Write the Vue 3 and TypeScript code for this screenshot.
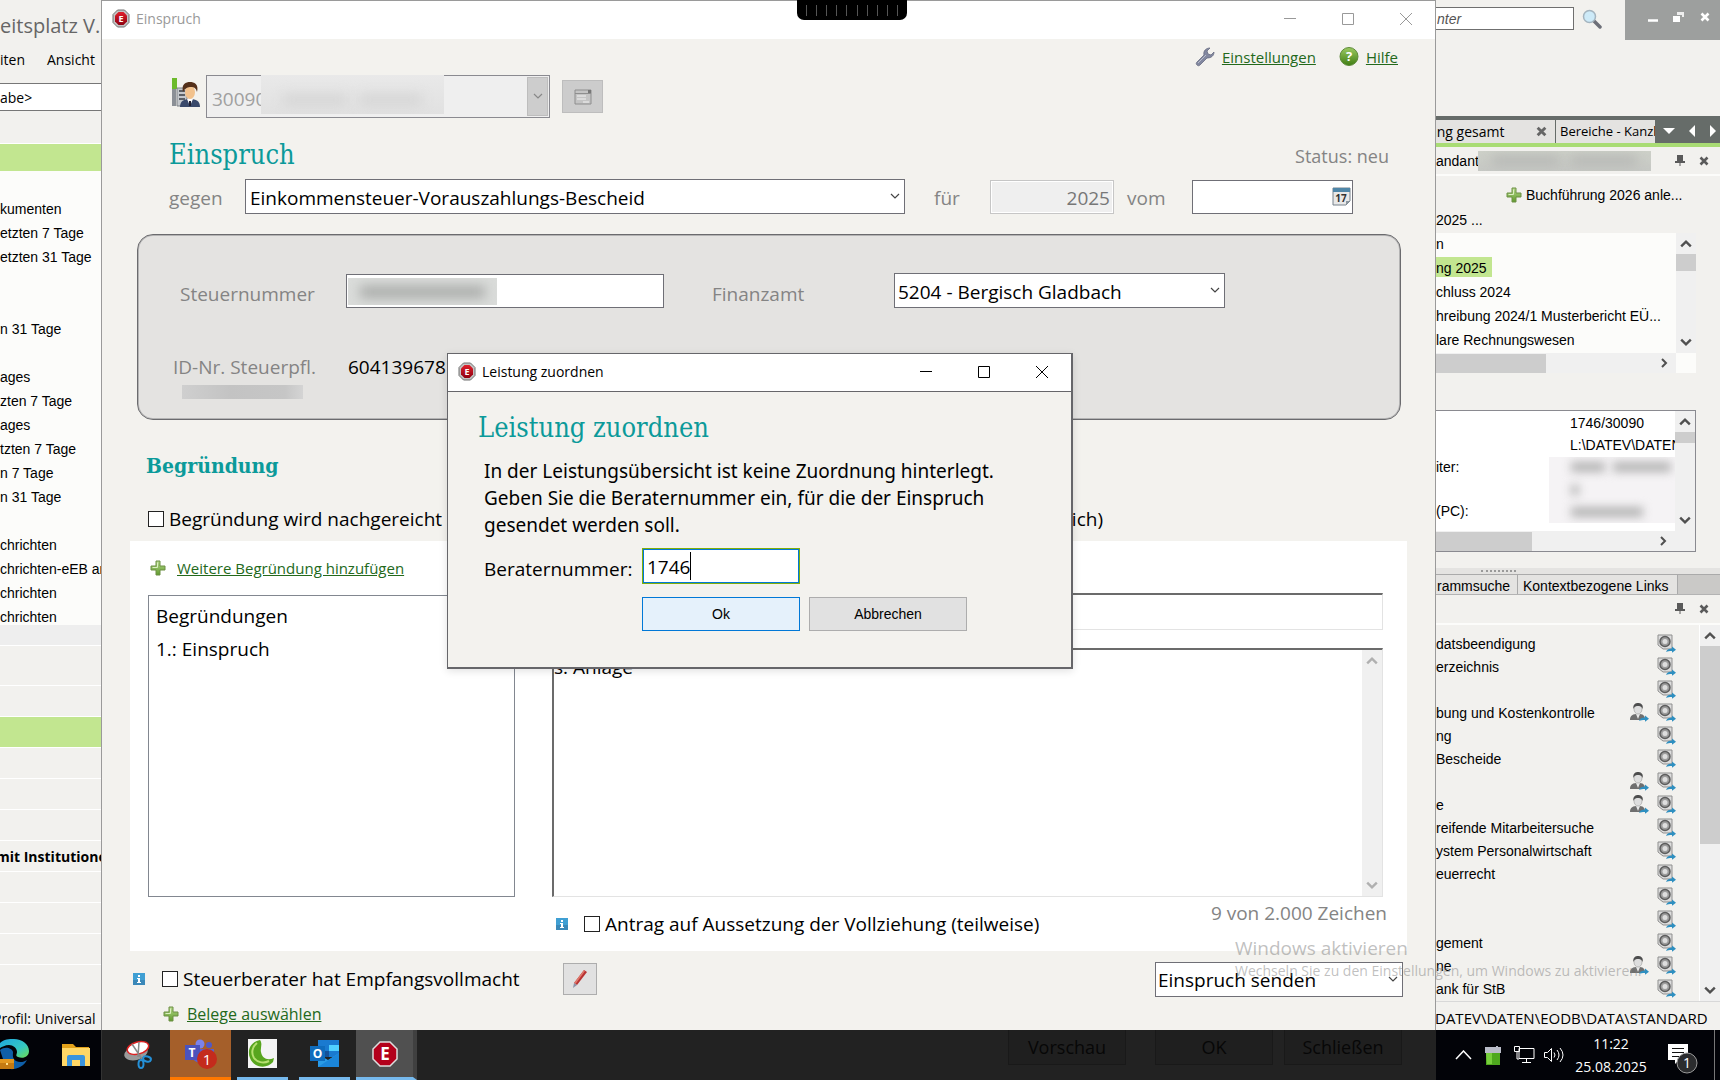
<script setup lang="ts">
import { ref } from 'vue'

interface LinkRow {
  text: string
  person?: boolean
}

const consultantNo = ref('1746')
const year = ref('2025')
const reasonText = ref('s. Anlage')

const leftTree: string[] = [
  'kumenten', 'etzten 7 Tage', 'etzten 31 Tage', '', '', 'n 31 Tage', '', 'ages', 'zten 7 Tage',
  'ages', 'tzten 7 Tage', 'n 7 Tage', 'n 31 Tage', '', 'chrichten', 'chrichten-eEB an', 'chrichten', 'chrichten',
]

const stock: { text: string; active?: boolean }[] = [
  { text: 'n' },
  { text: 'ng 2025', active: true },
  { text: 'chluss 2024' },
  { text: 'hreibung 2024/1 Musterbericht EÜ...' },
  { text: 'lare Rechnungswesen' },
]

const links: LinkRow[] = [
  { text: 'datsbeendigung' },
  { text: 'erzeichnis' },
  { text: '' },
  { text: 'bung und Kostenkontrolle', person: true },
  { text: 'ng' },
  { text: 'Bescheide' },
  { text: '', person: true },
  { text: 'e', person: true },
  { text: 'reifende Mitarbeitersuche' },
  { text: 'ystem Personalwirtschaft' },
  { text: 'euerrecht' },
  { text: '' },
  { text: '' },
  { text: 'gement' },
  { text: 'ne', person: true },
  { text: 'ank für StB' },
  { text: '', person: true },
]
</script>

<template>
  <div class="desktop">
    <svg class="defs" width="0" height="0" aria-hidden="true">
      <defs>
        <linearGradient id="gGreen" x1="0" y1="0" x2="0" y2="1">
          <stop offset="0" stop-color="#b5d98a" /><stop offset="1" stop-color="#5f9a2c" />
        </linearGradient>
        <linearGradient id="gBall" x1="0" y1="0" x2="0" y2="1">
          <stop offset="0" stop-color="#9ccb62" /><stop offset="1" stop-color="#3f7d12" />
        </linearGradient>
        <linearGradient id="gRed" x1="0" y1="0" x2="0" y2="1">
          <stop offset="0" stop-color="#e0202c" /><stop offset="1" stop-color="#8f0010" />
        </linearGradient>
        <linearGradient id="gEdge" x1="0" y1="0" x2="1" y2="1">
          <stop offset="0" stop-color="#1fa8e0" /><stop offset=".6" stop-color="#35c8c0" /><stop offset="1" stop-color="#6fdc50" />
        </linearGradient>
        <symbol id="stopE" viewBox="0 0 20 20">
          <path d="M6.500 1h7l4.500 4.500v8L13.500 18h-7L2 13.500v-8z" fill="#c4c4c4" stroke="#707070" stroke-width="1" />
          <path d="M7.500 3h5L16 6.500v6L12.500 16h-5L4 12.500v-6z" fill="url(#gRed)" />
          <text x="10" y="13" text-anchor="middle" font-family="Open Sans, sans-serif" font-weight="700" font-size="9" fill="#fff">E</text>
        </symbol>
        <symbol id="plus" viewBox="0 0 16 16">
          <path d="M6 1h4v5h5v4h-5v5H6v-5H1V6h5z" fill="url(#gGreen)" stroke="#6c8f45" stroke-width="1" />
          <path d="M7.500 2.500v5h-5" fill="none" stroke="#dcefc2" stroke-width="1" />
        </symbol>
        <symbol id="info" viewBox="0 0 12 12">
          <path d="M0 0h12v12H0z" fill="#3f9fd3" />
          <path d="M0 12h12V7H0z" fill="#3a88b8" />
          <path d="M5 2h2v2H5zM4 5h3v4h1v1H4V9h1V6H4z" fill="#fff" />
        </symbol>
        <symbol id="pin" viewBox="0 0 10 12">
          <path d="M2 0h6v6h2v2H5.500v3h-1V8H0V6h2z" fill="#5a5a5a" />
        </symbol>
        <symbol id="cross" viewBox="0 0 10 10">
          <path d="M1.500 1.500l7 7M8.500 1.500l-7 7" stroke="currentColor" stroke-width="2.600" />
        </symbol>
        <symbol id="vault" viewBox="0 0 19 19">
          <path d="M1 1h14v14H6l-5-4z" fill="#dcdcdc" stroke="#8f8f8f" />
          <circle cx="8" cy="7.500" r="5" fill="#9d9d9d" stroke="#5d5d5d" stroke-width="1.500" />
          <circle cx="8" cy="7.500" r="2.500" fill="#dedede" />
          <path d="M9 18c1-3 3-3.500 6-3.500v-2l4 3.200-4 3v-1.800c-3 0-4 0-6 1.100z" fill="#2f8fc0" />
        </symbol>
        <symbol id="person" viewBox="0 0 20 19">
          <path d="M1 17c0-5 3-6 8-6s7 1 7 6z" fill="#6f6f6f" />
          <path d="M7 11l2 5 2-5z" fill="#e9e9e9" />
          <ellipse cx="9" cy="6" rx="4" ry="5" fill="#dedede" stroke="#9a9a9a" stroke-width=".6" />
          <path d="M4.500 6C3.500 1 7 0 9 0s6 1 4.500 6c-1-3-3-3-4.500-3s-3.500 0-4.500 3z" fill="#4e4e4e" />
          <path d="M10 18c1-3 3-3.500 6-3.500v-2l4 3.200-4 3v-1.800c-3 0-4 0-6 1.100z" fill="#2f8fc0" />
        </symbol>
        <symbol id="arrUp" viewBox="0 0 10 8"><path d="M1 6l4-4 4 4" fill="none" stroke="currentColor" stroke-width="2" /></symbol>
        <symbol id="arrDown" viewBox="0 0 10 8"><path d="M1 2l4 4 4-4" fill="none" stroke="currentColor" stroke-width="2" /></symbol>
        <symbol id="arrRight" viewBox="0 0 8 10"><path d="M2 1l4 4-4 4" fill="none" stroke="currentColor" stroke-width="2" /></symbol>
        <symbol id="chev" viewBox="0 0 10 7"><path d="M1 1l4 4 4-4" fill="none" stroke="currentColor" stroke-width="1.200" /></symbol>
      </defs>
    </svg>

    <div class="workspace">
      <!-- Left part of the workplace window -->
      <aside class="left">
        <div class="app-title">eitsplatz V.1</div>
        <nav class="menu"><a href="#">iten</a><a href="#">Ansicht</a></nav>
        <input class="quick" type="text" value="abe&gt;" aria-label="Suche" />
        <div class="strip"></div>
        <ul class="tree">
          <li v-for="(t, i) in leftTree" :key="i">{{ t }}</li>
        </ul>
        <div class="track"></div>
        <div class="bars">
          <div class="bar tall"></div>
          <div class="bar"></div>
          <div class="bar on"></div>
          <div class="bar"></div>
          <div class="bar"></div>
          <div class="bar"></div>
          <div class="bar strong">mit Institutionen</div>
          <div class="bar"></div>
          <div class="bar"></div>
          <div class="bar"></div>
          <div class="bar last"></div>
        </div>
        <div class="status-left">Profil: Universal</div>
      </aside>

      <!-- Objection window -->
      <main class="window">
        <header class="titlebar">
          <svg width="20" height="20"><use href="#stopE" /></svg>
          <span class="caption">Einspruch</span>
          <button class="wbtn" aria-label="Minimieren"><svg width="12" height="12"><path d="M0 5.500h12" stroke="currentColor" /></svg></button>
          <button class="wbtn" aria-label="Maximieren"><svg width="12" height="12"><path d="M.5.5h11v11H.5z" fill="none" stroke="currentColor" /></svg></button>
          <button class="wbtn" aria-label="Schließen"><svg width="12" height="12"><path d="M0 0l12 12M12 0L0 12" stroke="currentColor" /></svg></button>
        </header>

        <div class="helpbar">
          <svg width="20" height="20" viewBox="0 0 20 20"><path d="M2 18c-1-1-1-2 0-3l7-7c-1-4 2-7 6-7l-3 3 1 3 3 1 3-3c0 4-3 6-7 6l-7 7c-1 1-2 1-3 0z" fill="#8288a0" stroke="#666b80" stroke-width=".8" /><path d="M3 16l8-8" stroke="#b9bdcc" stroke-width="1" /></svg>
          <a href="#">Einstellungen</a>
          <svg class="help-ic" width="20" height="20" viewBox="0 0 20 20"><circle cx="10" cy="9.500" r="9" fill="url(#gBall)" stroke="#5c8a38" /><text x="10" y="14" text-anchor="middle" font-family="Open Sans, sans-serif" font-weight="700" font-size="13" fill="#fff">?</text></svg>
          <a href="#">Hilfe</a>
        </div>

        <div class="client">
          <svg class="client-ic" width="30" height="30" viewBox="0 0 30 30">
            <path d="M1 4h4v24H1z" fill="#8b9096" /><path d="M1 0h5v11H1z" fill="#6dbb2c" />
            <path d="M6 10h10v18H6z" fill="#c4c8cc" stroke="#7d8287" /><path d="M8 13h6M8 17h6M8 21h6" stroke="#5c6167" stroke-width="2" />
            <path d="M9 29c0-6 4-8 10-8s10 2 10 8z" fill="#39496b" />
            <path d="M16 21l3 7 3-7z" fill="#fff" /><path d="M18 23h2v5h-2z" fill="#223" />
            <ellipse cx="19" cy="14" rx="5" ry="7" fill="#f2c28d" />
            <path d="M12 14c-2-8 3-10 7-10s9 2 7 10c-1-4-3-5-6-5s-6 1-8 5z" fill="#54301a" />
          </svg>
          <div class="client-box">
            <label class="sr" for="client">Mandant</label>
            <input id="client" type="text" value="30090" disabled />
            <span class="veil veil-client"><i></i><i></i></span>
            <button class="drop" disabled aria-label="Mandanten öffnen"><svg width="10" height="7"><use href="#chev" /></svg></button>
          </div>
          <button class="card-btn" disabled aria-label="Stammdaten">
            <svg width="18" height="16" viewBox="0 0 18 16"><path d="M1 1h16v14H1z" fill="#c4c4c4" stroke="#8e8e8e" /><path d="M1 4.500h16" stroke="#8e8e8e" /><path d="M3 7h9M3 10h9M9 13h6" stroke="#e2e2e2" stroke-width="1.500" /><path d="M14 1h3v3h-3z" fill="#777" /></svg>
          </button>
        </div>

        <div class="headrow">
          <h1>Einspruch</h1>
          <span class="grey status">Status: neu</span>
        </div>

        <div class="against">
          <label class="grey l-gegen" for="gegen">gegen</label>
          <div class="sel grow">
            <select id="gegen"><option>Einkommensteuer-Vorauszahlungs-Bescheid</option></select>
            <svg width="10" height="7"><use href="#chev" /></svg>
          </div>
          <label class="grey l-fuer" for="jahr">für</label>
          <input id="jahr" v-model="year" class="year" type="text" disabled />
          <label class="grey l-vom" for="datum">vom</label>
          <div class="date">
            <input id="datum" type="text" value="" />
            <svg width="19" height="19" viewBox="0 0 19 19"><path d="M1 1h17v13l-4 4H1z" fill="#e8e8e8" stroke="#77828c" /><path d="M1 1h17v4H1z" fill="#4f86a8" /><path d="M14 18v-4h4z" fill="#8c969e" /><text x="9" y="15" text-anchor="middle" font-family="Open Sans, sans-serif" font-weight="700" font-size="10" fill="#333">17</text></svg>
          </div>
        </div>

        <section class="panel">
          <div class="prow">
            <label class="grey l-tax" for="stnr">Steuernummer</label>
            <div class="tax"><input id="stnr" type="text" value="" /><span class="veil veil-tax"><i></i></span></div>
            <label class="grey l-office" for="fa">Finanzamt</label>
            <div class="sel office">
              <select id="fa"><option>5204 - Bergisch Gladbach</option></select>
              <svg width="10" height="7"><use href="#chev" /></svg>
            </div>
          </div>
          <div class="prow second">
            <span class="grey l-id">ID-Nr. Steuerpfl.</span>
            <span>604139678</span>
          </div>
          <div class="smudge"></div>
        </section>

        <h2>Begründung</h2>
        <div class="later">
          <label><input type="checkbox" />Begründung wird nachgereicht</label>
          <span class="later-end">ich)</span>
        </div>

        <section class="reasons">
          <div class="col-list">
            <div class="add"><svg width="16" height="16"><use href="#plus" /></svg><a href="#">Weitere Begründung hinzufügen</a></div>
            <ul class="listbox"><li>Begründungen</li><li>1.: Einspruch</li></ul>
          </div>
          <div class="col-text">
            <input class="sunken subject" type="text" value="" aria-label="Überschrift" />
            <div class="sunken area">
              <textarea v-model="reasonText" aria-label="Begründungstext"></textarea>
              <div class="sbar pale"><svg width="12" height="10"><use href="#arrUp" /></svg><svg width="12" height="10"><use href="#arrDown" /></svg></div>
            </div>
            <div class="suspend">
              <svg width="12" height="12"><use href="#info" /></svg>
              <label><input type="checkbox" />Antrag auf Aussetzung der Vollziehung (teilweise)</label>
              <span class="grey counter">9 von 2.000 Zeichen</span>
            </div>
          </div>
        </section>

        <div class="proxy">
          <svg width="12" height="12"><use href="#info" /></svg>
          <label><input type="checkbox" />Steuerberater hat Empfangsvollmacht</label>
          <button class="pencil" aria-label="Bearbeiten"><svg width="18" height="20" viewBox="0 0 18 20"><path d="M13 1l3 2L6 16l-3-2z" fill="#b83232" /><path d="M13 1l1 1L4.500 15 3 14z" fill="#e07a6e" /><path d="M3 14l3 2-4 3z" fill="#8d93a8" /></svg></button>
          <div class="sel send">
            <select aria-label="Aktion"><option>Einspruch senden</option></select>
            <svg width="10" height="7"><use href="#chev" /></svg>
          </div>
        </div>
        <div class="add docs"><svg width="16" height="16"><use href="#plus" /></svg><a href="#">Belege auswählen</a></div>
      </main>

      <!-- Right part of the workplace window -->
      <aside class="right">
        <div class="topline">
          <input class="find" type="text" value="nter" aria-label="Suchbegriff" />
          <svg class="lens" width="20" height="20" viewBox="0 0 20 20"><path d="M12 12l6 6" stroke="#6d6f78" stroke-width="3.500" stroke-linecap="round" /><circle cx="7.500" cy="7.500" r="6" fill="#cdeaf8" stroke="#a4b4bf" stroke-width="1.500" /></svg>
          <div class="ctl">
            <svg width="10" height="12"><path d="M0 9.500h10" stroke="#fff" stroke-width="2.500" /></svg>
            <svg width="12" height="12"><path d="M4 1h7v5H9V4H4z" fill="#eee" /><path d="M0 5h7v6H0z" fill="#fff" /></svg>
            <svg width="10" height="10"><use href="#cross" /></svg>
          </div>
        </div>
        <div class="tabs-dark">
          <div class="tab t1"><span>ang gesamt</span><svg width="11" height="11"><use href="#cross" /></svg></div>
          <div class="tab t2">Bereiche - Kanzlei</div>
          <svg width="12" height="8"><path d="M0 1h12L6 7z" fill="#fff" /></svg>
          <svg width="8" height="12"><path d="M7 0v12L1 6z" fill="#fff" /></svg>
          <svg width="8" height="12"><path d="M1 0v12l6-6z" fill="#fff" /></svg>
        </div>
        <div class="pane-head first">
          <span>andant</span><span class="veil veil-mandant"><i></i><i></i></span>
          <svg class="pin" width="10" height="12"><use href="#pin" /></svg><svg width="10" height="10"><use href="#cross" /></svg>
        </div>
        <div class="booking"><svg width="16" height="16"><use href="#plus" /></svg><a href="#">Buchführung 2026 anle...</a></div>
        <div class="year-line">2025 ...</div>
        <div class="stock">
          <ul><li v-for="s in stock" :key="s.text"><span :class="{ active: s.active }">{{ s.text }}</span></li></ul>
          <div class="sbar"><svg width="12" height="10"><use href="#arrUp" /></svg><span class="thumb t-a"></span><svg class="end" width="12" height="10"><use href="#arrDown" /></svg></div>
          <div class="hbar"><span class="thumb h-a"></span><svg width="8" height="12"><use href="#arrRight" /></svg></div>
          <div class="corner"></div>
        </div>
        <div class="details">
          <dl>
            <dt></dt><dd>1746/30090</dd>
            <dt></dt><dd>L:\DATEV\DATEN</dd>
            <dt>iter:</dt><dd></dd>
            <dt></dt><dd></dd>
            <dt>(PC):</dt><dd></dd>
          </dl>
          <span class="veil veil-details"><i></i><i></i><i></i><i></i></span>
          <div class="sbar"><svg width="12" height="10"><use href="#arrUp" /></svg><span class="thumb t-b"></span><svg class="end" width="12" height="10"><use href="#arrDown" /></svg></div>
          <div class="hbar"><span class="thumb h-b"></span><svg width="8" height="12"><use href="#arrRight" /></svg></div>
          <div class="corner grey-corner"></div>
        </div>
        <div class="splitter"><span></span></div>
        <div class="tabs-light"><div class="tab p1">rammsuche</div><div class="tab p2">Kontextbezogene Links</div></div>
        <div class="pane-head"><span></span><svg class="pin" width="10" height="12"><use href="#pin" /></svg><svg width="10" height="10"><use href="#cross" /></svg></div>
        <div class="links">
          <ul>
            <li v-for="(l, i) in links" :key="i">
              <a href="#">{{ l.text }}</a>
              <svg v-if="l.person" width="20" height="19"><use href="#person" /></svg>
              <svg width="19" height="19"><use href="#vault" /></svg>
            </li>
          </ul>
          <div class="sbar"><svg width="12" height="10"><use href="#arrUp" /></svg><span class="thumb t-c"></span><svg class="end" width="12" height="10"><use href="#arrDown" /></svg></div>
        </div>
        <div class="status-right">DATEV\DATEN\EODB\DATA\STANDARD</div>
      </aside>

      <div class="grip"><span v-for="n in 10" :key="n"></span></div>

      <!-- Assignment dialog -->
      <div class="dialog" role="dialog" aria-labelledby="dlg">
        <header class="titlebar">
          <svg width="20" height="20"><use href="#stopE" /></svg>
          <span class="caption">Leistung zuordnen</span>
          <button class="wbtn" aria-label="Minimieren"><svg width="12" height="12"><path d="M0 5.500h12" stroke="currentColor" /></svg></button>
          <button class="wbtn" aria-label="Maximieren"><svg width="12" height="12"><path d="M.5.5h11v11H.5z" fill="none" stroke="currentColor" /></svg></button>
          <button class="wbtn" aria-label="Schließen"><svg width="12" height="12"><path d="M0 0l12 12M12 0L0 12" stroke="currentColor" /></svg></button>
        </header>
        <div class="dlg-body">
          <h1 id="dlg">Leistung zuordnen</h1>
          <p>In der Leistungsübersicht ist keine Zuordnung hinterlegt.<br />Geben Sie die Beraternummer ein, für die der Einspruch<br />gesendet werden soll.</p>
          <div class="dlg-grid">
            <label for="berater">Beraternummer:</label>
            <div class="focus"><input id="berater" v-model="consultantNo" type="text" /><span class="caret"></span></div>
            <button class="btn primary">Ok</button>
            <button class="btn">Abbrechen</button>
          </div>
        </div>
      </div>

      <div class="watermark"><strong>Windows aktivieren</strong><span>Wechseln Sie zu den Einstellungen, um Windows zu aktivieren.</span></div>
    </div>

    <footer class="taskbar">
      <div class="tb-left">
        <svg width="30" height="32" viewBox="0 0 30 32">
          <path d="M0 4C4 0 9 0 14 0c8 0 15 5 15 12 0 6-6 8-11 6-3-1-1-3-1-5 0-4-4-7-8-7S2 8 0 9z" fill="url(#gEdge)" />
          <path d="M0 11c5-4 12-2 13 2 0 3-1 6 3 9 4 2 8 1 11-1-4 8-14 11-21 8z" fill="#0f5fa8" />
          <path d="M0 20h14v10H0z" fill="#c47a12" /><path d="M0 20h14v4H0z" fill="#e2971f" /><path d="M6 24h2v2H6z" fill="#ffe08a" />
        </svg>
        <svg width="28" height="24" viewBox="0 0 28 24"><path d="M0 1h11l3 3h13v19H0z" fill="#e3a21a" /><path d="M0 5h28v18H0z" fill="#ffd766" /><path d="M5 23V14q0-2 2-2h14q2 0 2 2v9h-5v-6h-8v6z" fill="#3a94dd" /></svg>
      </div>
      <div class="tb-mid">
        <div class="task snip"><svg width="30" height="30" viewBox="0 0 30 30"><ellipse cx="13" cy="13" rx="12" ry="7" transform="rotate(-15 13 13)" fill="#9a9a9a" /><ellipse cx="15" cy="8" rx="11" ry="6" transform="rotate(-15 15 8)" fill="#fff" stroke="#d22" stroke-width="1.500" /><path d="M9 4l10 15M16 2l-1 15" stroke="#888" stroke-width="1.500" /><ellipse cx="24" cy="19" rx="4" ry="2.500" transform="rotate(15 24 19)" fill="none" stroke="#2490d8" stroke-width="2" /><ellipse cx="18" cy="24" rx="2.500" ry="4" fill="none" stroke="#2490d8" stroke-width="2" /></svg></div>
        <div class="task teams"><svg width="32" height="30" viewBox="0 0 32 30"><circle cx="15" cy="5" r="4.500" fill="#7b83eb" /><circle cx="24" cy="6" r="3" fill="#5059c9" /><path d="M8 10h21v9c0 6-19 8-21 0z" fill="#5b62c9" /><path d="M0 6h15v15H0z" fill="#4b53bc" /><text x="7" y="18" text-anchor="middle" font-family="Open Sans, sans-serif" font-weight="700" font-size="12" fill="#fff">T</text><circle cx="22" cy="20" r="10" fill="#c42b1c" /><text x="22" y="26" text-anchor="middle" font-family="Open Sans, sans-serif" font-size="15" fill="#fff">1</text></svg></div>
        <div class="task run"><svg width="29" height="29" viewBox="0 0 29 29"><path d="M0 0h29v29H0z" fill="#f4f4f4" /><path d="M12 1C2 3-1 12 2 19c3 9 16 12 23 4l1-4c-7 3-12 0-13-6-1-4 2-8-1-12z" fill="#58a51e" /><path d="M9 4C4 8 3 14 6 19c3 4 9 6 15 3" fill="none" stroke="#b6e070" stroke-width="2" /></svg></div>
        <div class="task run"><svg width="30" height="28" viewBox="0 0 30 28"><path d="M8 0h21v17H8z" fill="#1a7ad0" /><path d="M19 5h10v6H19z" fill="#50d0ff" /><path d="M8 11h11v6H8z" fill="#14519a" /><path d="M8 14l10 6 11-7v14H8z" fill="#2a9be6" /><path d="M8 27l21-14v14z" fill="#1b86da" /><path d="M0 6h15v15H0z" fill="#0f6cbd" /><text x="7.500" y="18" text-anchor="middle" font-family="Open Sans, sans-serif" font-weight="700" font-size="12" fill="#fff">O</text></svg></div>
        <div class="task cur"><svg width="26" height="26" viewBox="0 0 26 26"><path d="M8 1h10l7 7v10l-7 7H8l-7-7V8z" fill="#b3001b" stroke="#ddd" stroke-width="1.500" /><text x="13" y="19" text-anchor="middle" font-family="Open Sans, sans-serif" font-weight="700" font-size="17" fill="#fff">E</text></svg></div>
        <div class="under">
          <button>Vorschau</button><button>OK</button><button>Schließen</button>
        </div>
      </div>
      <div class="tb-right">
        <svg width="17" height="10"><path d="M1 9l7.500-8L16 9" fill="none" stroke="#fff" stroke-width="1.500" /></svg>
        <svg class="i-bin" width="16" height="19" viewBox="0 0 16 19"><path d="M0 1h11V0h2v1h3v6H0z" fill="#b9bcc8" /><path d="M1 7h14v12H1z" fill="#4ea81e" /><path d="M1 7h6v11H2z" fill="#77cf3c" /></svg>
        <svg class="i-net" width="21" height="18" viewBox="0 0 21 18"><path d="M5 2.500h15v10H5zM8 16.500h9M12.500 13v3M.5.5h5v5h-5zM3 6v7h2" fill="none" stroke="#fff" /></svg>
        <svg class="i-snd" width="21" height="18" viewBox="0 0 21 18"><path d="M.5 6.500h3l4-4v13l-4-4h-3z" fill="none" stroke="#fff" /><path d="M10 6.500q2 2.500 0 5M13 4q4 5 0 10M16 2q6 7 0 14" fill="none" stroke="#fff" /></svg>
        <div class="clock"><span>11:22</span><span>25.08.2025</span></div>
        <svg class="i-msg" width="30" height="30" viewBox="0 0 30 30"><path d="M0 0h20v16h-9l-4 4v-4H0z" fill="#fff" /><path d="M4 4.500h12M4 8.500h12M4 12.500h8" stroke="#111" /><circle cx="19" cy="19" r="10" fill="#2b2c2e" stroke="#9a9a9a" /><text x="19" y="24" text-anchor="middle" font-family="Open Sans, sans-serif" font-size="14" fill="#fff">1</text></svg>
        <span class="peek"></span>
      </div>
    </footer>
  </div>
</template>

<style>
body {
  margin: 0;
}
</style>

<style scoped>
* {
  box-sizing: border-box;
}
.desktop {
  --ui: "Open Sans", "Noto Sans", sans-serif;
  --sans: "Liberation Sans", Arial, sans-serif;
  min-height: 100vh;
  display: flex;
  flex-direction: column;
  overflow: hidden;
  background: #f2f1ee;
  font-family: var(--ui);
  font-size: 19px;
  line-height: 24px;
  color: #000;
}
.defs { position: absolute; }
svg { flex: none; display: block; }
ul, dl, dd, p, h1, h2 { margin: 0; padding: 0; list-style: none; }
button, input, select, textarea { font: inherit; color: inherit; border-radius: 0; margin: 0; }
.sr { position: absolute; width: 1px; height: 1px; overflow: hidden; clip-path: inset(50%); }
.grey { color: #848484; }
.workspace {
  position: relative;
  flex: 1;
  display: grid;
  grid-template-columns: 101px minmax(0, 1fr) 284px;
}

/* left pane */
.left { display: flex; flex-direction: column; overflow: hidden; white-space: nowrap; font-size: 14px; }
.app-title { height: 46px; padding-top: 14px; font-size: 20px; color: #666; }
.menu { display: flex; gap: 22px; height: 37px; padding-top: 2px; }
.menu a { color: #000; text-decoration: none; }
.quick { height: 28px; width: 110px; border: 1px solid #777; border-left: 0; background: #fff; padding: 0; }
.strip { height: 28px; margin-top: 32px; background: #c2e690; border-top: 1px solid #fff; }
.tree { height: 454px; padding-top: 26px; background: #fcfcfa; font: 14px/24px var(--sans); }
.tree li { height: 24px; }
.track { height: 20px; background: #eeeeee; }
.bars { flex: 1; display: flex; flex-direction: column; }
.bar { height: 31px; border-top: 1px solid #fff; }
.bar.tall { height: 40px; }
.bar.on { background: #c2e690; }
.bar.strong { font-weight: 700; line-height: 32px; text-indent: -4px; }
.bar.last { flex: 1; border-bottom: 1px solid #fff; }
.status-left { height: 26px; line-height: 30px; text-indent: -7px; }

/* main window */
.window { display: flex; flex-direction: column; border: 1px solid #9a9a9a; border-bottom: 0; background: #f3f2ee; min-width: 0; }
.titlebar { display: flex; align-items: center; height: 38px; padding-left: 9px; background: #fff; }
.caption { flex: 1; margin-left: 5px; font-size: 14px; }
.wbtn { width: 58px; height: 36px; display: flex; align-items: center; justify-content: center; border: 0; padding: 0; background: none; }
.window .titlebar { color: #999; }
.window .titlebar, .dialog .titlebar { padding-bottom: 2px; }
a { color: #23691b; }
.helpbar { display: flex; justify-content: flex-end; align-items: center; height: 36px; padding-right: 37px; font-size: 15px; gap: 7px; }
.help-ic { margin-left: 16px; }
.client { display: flex; height: 43px; padding-left: 69px; }
.client-ic { margin: 3px 5px 0 0; }
.client-box { position: relative; display: flex; width: 344px; padding: 1px; border: 1px solid #8a8a90; background: #efefef; }
.client-box input { flex: 1; min-width: 0; border: 0; background: none; padding: 4px 4px 0; color: #a0a0a0; }
.drop { width: 21px; border: 1px solid #bdbdbd; background: #cdcdcd; color: #888; display: flex; align-items: center; justify-content: center; padding: 0; }
.card-btn { width: 41px; height: 33px; margin: 5px 0 0 12px; border: 1px solid #bdbdbd; background: #cccccc; padding: 0; display: flex; align-items: center; justify-content: center; }
.veil { display: block; overflow: hidden; }
.veil i { display: block; filter: blur(6px); }
.veil-client { position: absolute; left: 54px; top: -1px; width: 183px; height: 39px; background: linear-gradient(#e9e9e9, #e1e1e1); padding: 19px 22px; display: flex; gap: 12px; }
.veil-client i { flex: 1; height: 12px; background: #d6d6d6; }
h1, h2 { font-family: "DejaVu Serif Condensed", "DejaVu Serif", serif; font-stretch: condensed; font-weight: 400; color: #0b9a9a; }
h1 { font-size: 27px; line-height: 32px; }
.headrow { display: flex; align-items: center; justify-content: space-between; height: 61px; padding: 12px 46px 0 67px; }
.status { font-size: 18px; padding-top: 2px; }
.against { display: flex; align-items: center; height: 35px; padding: 0 82px 0 67px; }
.against label, .prow label { padding-top: 2px; }
.l-gegen { width: 76px; }
.sel { position: relative; height: 35px; }
.sel.grow { flex: 1; }
.sel select { appearance: none; width: 100%; height: 35px; border: 1px solid #6f6f76; background: #fff; padding: 2px 4px 0; }
.sel svg { position: absolute; right: 5px; top: 14px; color: #444; }
.against .l-fuer { width: 85px; padding-left: 29px; }
.year { width: 124px; height: 34px; border: 1px solid #c6c6c6; background: #efefef; color: #777; text-align: right; padding: 2px 3px 0; box-shadow: inset 0 0 0 1px #fff; }
.against .l-vom { width: 78px; padding-left: 13px; }
.date { position: relative; width: 161px; }
.date input { width: 100%; height: 34px; border: 1px solid #6f6f76; background: #fff; display: block; }
.date svg { position: absolute; right: 2px; top: 7px; }

.panel { margin: 20px 34px 0 35px; height: 186px; border: 1px solid #6b6b6e; border-radius: 16px; background: #e4e3e1; padding: 38px 0 0 35px; box-shadow: inset 0 0 0 1px #b4b4b4; }
.prow { display: flex; align-items: center; height: 35px; }
.prow.second { height: 30px; margin-top: 44px; }
.prow .l-tax { width: 173px; padding: 6px 0 0 7px; }
.l-id { width: 175px; }
.tax { position: relative; width: 318px; }
.tax input { display: block; width: 100%; height: 34px; border: 1px solid #6f6f76; background: #fff; }
.veil-tax { position: absolute; left: 2px; top: 4px; width: 149px; height: 27px; background: #dadcda; padding: 8px 12px; }
.veil-tax i { height: 12px; background: #a9aba9; }
.prow .l-office { width: 230px; padding: 6px 0 0 48px; }
.sel.office { width: 331px; }
.sel.office select { padding-left: 3px; }
.smudge { width: 121px; height: 14px; margin: 3px 0 0 9px; background: linear-gradient(90deg, #cfcfcf, #c3c3c3 40%, #c6c6c6 85%, #d4d4d4); }

h2 { height: 81px; padding: 31px 0 0 44px; font-size: 21px; line-height: 30px; font-weight: 700; }
.later { display: flex; align-items: flex-start; height: 40px; padding: 6px 0 0 46px; }
.later-end { flex: 1; text-align: right; padding-right: 332px; }
label { display: flex; align-items: center; white-space: nowrap; }
input[type="checkbox"] { appearance: none; width: 16px; height: 16px; border: 1px solid #222; background: #fff; margin-right: 5px; }
.reasons { flex: 1; display: grid; grid-template-columns: 367px minmax(0, 1fr); column-gap: 37px; margin: 0 28px; padding: 0 24px 0 18px; background: #fff; }
.col-list { display: flex; flex-direction: column; padding-bottom: 54px; }
.add { display: flex; align-items: center; gap: 11px; height: 54px; padding-left: 2px; font-size: 15px; }
.listbox { flex: 1; border: 1px solid #828790; padding: 4px 7px; line-height: 33px; }
.col-text { display: flex; flex-direction: column; padding-top: 52px; }
.sunken { border: 1px solid #e3e3e3; border-top: 2px solid #6b6b6b; border-left: 2px solid #6b6b6b; background: #fff; }
.subject { height: 37px; }
.area { flex: 1; display: flex; margin-top: 18px; }
.area textarea { flex: 1; border: 0; resize: none; padding: 5px 0; background: none; outline: none; display: block; }
.suspend { display: flex; align-items: center; height: 54px; padding-left: 4px; margin-right: -4px; }
.suspend label { margin-left: 16px; }
.counter { flex: 1; text-align: right; margin-top: -22px; }
.proxy { display: flex; align-items: center; height: 51px; padding: 5px 32px 0 31px; }
.proxy label { width: 401px; margin-left: 17px; }
.pencil { width: 34px; height: 32px; border: 1px solid #adadad; background: #e1e1e1; padding: 0; display: flex; align-items: center; justify-content: center; }
.sel.send { width: 248px; margin-left: auto; }
.sel.send select { padding: 2px 2px 0; }
.docs { height: 24px; margin-bottom: 4px; padding-left: 61px; gap: 8px; font-size: 16px; }

/* right pane */
.right { display: flex; flex-direction: column; font: 14px/24px var(--sans); white-space: nowrap; overflow: hidden; min-width: 0; }
.right a { color: #000; text-decoration: none; }
.topline { display: flex; height: 116px; }
.find { width: 138px; height: 23px; margin-top: 7px; border: 1px solid #6f6f6f; border-left: 0; background: #fff; padding: 0 1px; font-style: italic; color: #555; }
.lens { margin: 9px 0 0 8px; }
.ctl { display: flex; align-items: center; justify-content: space-between; width: 95px; height: 40px; margin-left: auto; padding: 0 10px 6px 23px; background: #9d9f9e; color: #fff; }
.tabs-dark { display: flex; align-items: center; gap: 13px; height: 27px; background: #666c69; padding-top: 3px; font: 14px/23px var(--ui); }
.tabs-dark .tab { height: 23px; background: #e4e3e1; overflow: hidden; }
.tabs-dark .t1 { display: flex; align-items: center; justify-content: space-between; width: 119px; padding-right: 8px; color: #666; text-indent: -7px; }
.t1 span { color: #000; }
.tabs-dark .t2 { width: 99px; margin-left: -12px; padding-left: 4px; margin-right: -5px; font-size: 13px; }
.pane-head { display: flex; align-items: center; height: 30px; border-bottom: 2px solid #fcfcfa; color: #5a5a5a; padding-right: 11px; }
.pane-head span:first-child { color: #000; flex: 1; }
.pane-head.first { height: 33px; border-top: 4px solid #a9dc74; }
.pane-head.first span:first-child { flex: none; width: 42px; }
.pane-head .pin { margin: 0 14px 0 auto; }
.veil-mandant { width: 173px; height: 20px; background: linear-gradient(#cdd0c8, #c6c8c4); display: flex; gap: 10px; padding: 5px 14px; }
.veil-mandant i { flex: 1; height: 9px; background: #b4b5b3; }
.booking { display: flex; align-items: center; gap: 4px; height: 34px; padding: 4px 0 0 70px; }
.year-line { height: 23px; line-height: 20px; }
.stock, .details { display: grid; grid-template-columns: minmax(0, 1fr) 20px; }
.stock { height: 140px; margin-right: 24px; grid-template-rows: 120px 20px; background: #fcfcfa; }
.stock li { height: 24px; line-height: 22px; overflow: hidden; }
.stock .active { display: inline-block; height: 20px; padding-right: 5px; background: #c2e690; }
.sbar { display: flex; flex-direction: column; align-items: center; width: 20px; background: #f0f0f0; color: #505050; padding: 6px 0; gap: 5px; }
.sbar .thumb { width: 100%; }
.sbar .end { margin-top: auto; }
.sbar.pale { color: #b0b0b0; justify-content: space-between; }
.thumb { display: block; background: #cdcdcd; }
.t-a { height: 17px; }
.t-b { height: 11px; }
.t-c { height: 198px; }
.hbar { display: flex; align-items: center; justify-content: space-between; background: #f0f0f0; color: #505050; padding-right: 8px; }
.hbar .thumb { height: 19px; }
.h-a { width: 110px; }
.h-b { width: 96px; }
.details { position: relative; height: 142px; margin: 37px 24px 0 0; grid-template-rows: 120px 20px; border: 1px solid #8a8a90; border-left: 0; background: #fff; }
.details dl { display: grid; grid-template-columns: 134px minmax(0, 1fr); grid-auto-rows: 22px; line-height: 24px; overflow: hidden; }
.details dd { overflow: hidden; }
.grey-corner { background: #f0f0f0; }
.veil-details { position: absolute; left: 113px; top: 46px; width: 126px; height: 66px; background: #f5f3f5; display: flex; flex-wrap: wrap; align-content: space-between; gap: 8px; padding: 5px 0 6px 22px; }
.veil-details i { width: 34px; height: 10px; background: #b4b4b4; filter: blur(5px); }
.veil-details i:nth-child(2) { width: 58px; }
.veil-details i:nth-child(3) { width: 8px; margin-right: 70px; }
.veil-details i:nth-child(4) { width: 72px; }
.splitter { height: 6px; margin-top: 16px; background: #e4e3e1; padding: 2px 0 0 45px; }
.splitter span { display: block; width: 35px; border-top: 2px dotted #999; }
.tabs-light { display: flex; height: 21px; background: #cac9c7; border-top: 1px solid #aaa; border-bottom: 1px solid #b3b3b3; line-height: 22px; }
.tabs-light .tab { background: #e4e3e1; border-right: 1px solid #aaa; }
.tabs-light .p1 { width: 82px; text-indent: 1px; }
.tabs-light .p2 { width: 160px; padding-left: 5px; }
.links { flex: 1; display: flex; height: 377px; overflow: hidden; border-bottom: 1px solid #d8d8d8; }
.links ul { flex: 1; min-width: 0; height: 376px; padding: 7px 23px 0 0; border-right: 1px solid #fff; overflow: hidden; }
.links li { display: flex; align-items: center; gap: 8px; height: 23px; }
.links li a { flex: 1; }
.status-right { height: 28px; font: 15px/32px var(--ui); text-indent: -1px; }

/* overlays */
.grip { position: absolute; left: 797px; top: 0; width: 110px; height: 20px; display: flex; justify-content: space-between; align-items: center; padding: 0 9px; background: #000; border-radius: 0 0 7px 7px; }
.grip span { width: 1px; height: 11px; background: #555; }
.dialog { position: absolute; left: 447px; top: 353px; width: 626px; height: 316px; border: 1px solid #66666a; border-right-width: 2px; border-bottom-width: 2px; background: #f3f2ee; box-shadow: 0 2px 8px rgba(0, 0, 0, 0.12); }
.dialog .titlebar { border-bottom: 1px solid #66666a; }
.dlg-body { padding: 20px 24px 0 30px; }
.dlg-body p { margin: 14px 0 0 6px; font-family: "Noto Sans", sans-serif; line-height: 27px; white-space: nowrap; }
.dlg-grid { display: grid; grid-template-columns: 149px 158px 158px; column-gap: 9px; row-gap: 13px; margin: 9px 0 0 6px; }
.dlg-grid label { padding-top: 6px; }
.focus { position: relative; border: 1px solid #7fae0b; grid-column: 2 / 4; width: 158px; }
.focus input { width: 100%; height: 34px; border: 1px solid #0078d7; padding: 2px 3px 0; display: block; background: #fff; outline: none; }
.caret { position: absolute; left: 47px; top: 3px; width: 1px; height: 28px; background: #000; }
.btn { height: 34px; border: 1px solid #adadad; background: #e1e1e1; font: 14px/20px var(--sans); padding: 0; }
.btn.primary { grid-column: 2; border-color: #0078d7; background: #e5f1fb; }
.watermark { position: absolute; left: 1235px; top: 934px; display: flex; flex-direction: column; color: rgba(130, 130, 130, 0.5); white-space: nowrap; pointer-events: none; }
.watermark strong { font-weight: 400; font-size: 19px; line-height: 28px; }
.watermark span { font-size: 14px; line-height: 18px; }

/* taskbar */
.taskbar { display: grid; grid-template-columns: 101px minmax(0, 1fr) 284px; height: 50px; background: #020308; color: #fff; }
.tb-left { display: flex; align-items: center; gap: 32px; }
.tb-mid { display: flex; background: #222222; border-left: 1px solid #333; }
.task { display: flex; align-items: center; justify-content: center; height: 50px; }
.snip { width: 68px; padding-left: 4px; }
.teams { width: 61px; background: #a55f2a; border-bottom: 3px solid #ff7800; }
.run { width: 51px; margin-left: 6px; border-bottom: 3px solid #76b9ed; }
.run + .run { margin-left: 11px; }
.cur { width: 61px; margin-left: 6px; background: #505050; border-bottom: 3px solid #76b9ed; border-right: 4px solid #404040; }
.under { display: flex; margin-left: auto; padding-right: 34px; gap: 11px; }
.under button { width: 118px; height: 35px; border: 1px solid #191919; border-top: 0; background: #1f1f1f; color: #070707; padding: 0; font-size: 18px; }
.under button:first-child { margin-right: 18px; }
.tb-right { display: flex; align-items: center; padding-left: 19px; }
.i-bin { margin-left: 13px; }
.i-net { margin-left: 13px; }
.i-snd { margin-left: 9px; }
.clock { width: 88px; margin-left: 2px; display: flex; flex-direction: column; text-align: center; font-size: 14px; line-height: 23px; }
.i-msg { margin: 8px 0 0 13px; }
.peek { margin-left: auto; width: 6px; height: 50px; border-left: 1px solid #777; }
</style>
